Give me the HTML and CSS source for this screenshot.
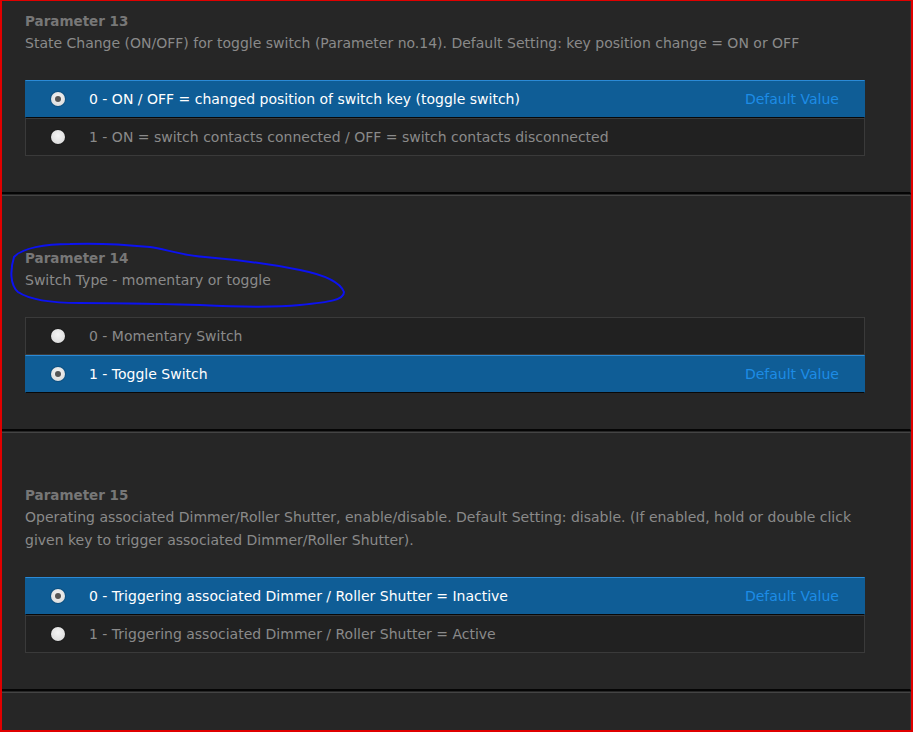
FILE: index.html
```html
<!DOCTYPE html>
<html lang="en">
<head>
    <meta charset="UTF-8">
    <meta name="viewport" content="width=device-width, initial-scale=1.0">
    <title>Configuration parameters</title>
    <link rel="stylesheet" href="styles.css">
</head>
<body>
    <div class="frame">
        <div class="param param-first">
            <div class="param-title">Parameter 13</div>
            <div class="param-desc">State Change (ON/OFF) for toggle switch (Parameter no.14). Default Setting: key position change = ON or OFF</div>
            <div class="options">
                <div class="option selected">
                    <span class="radio"></span>
                    <span class="option-label">0 - ON / OFF = changed position of switch key (toggle switch)</span>
                    <span class="default-tag">Default Value</span>
                </div>
                <div class="option">
                    <span class="radio"></span>
                    <span class="option-label">1 - ON = switch contacts connected / OFF = switch contacts disconnected</span>
                </div>
            </div>
        </div>

        <div class="param">
            <div class="param-title">Parameter 14</div>
            <div class="param-desc">Switch Type - momentary or toggle</div>
            <div class="options">
                <div class="option">
                    <span class="radio"></span>
                    <span class="option-label">0 - Momentary Switch</span>
                </div>
                <div class="option selected">
                    <span class="radio"></span>
                    <span class="option-label">1 - Toggle Switch</span>
                    <span class="default-tag">Default Value</span>
                </div>
            </div>
        </div>

        <div class="param">
            <div class="param-title">Parameter 15</div>
            <div class="param-desc">Operating associated Dimmer/Roller Shutter, enable/disable. Default Setting: disable. (If enabled, hold or double click given key to trigger associated Dimmer/Roller Shutter).</div>
            <div class="options">
                <div class="option selected">
                    <span class="radio"></span>
                    <span class="option-label">0 - Triggering associated Dimmer / Roller Shutter = Inactive</span>
                    <span class="default-tag">Default Value</span>
                </div>
                <div class="option">
                    <span class="radio"></span>
                    <span class="option-label">1 - Triggering associated Dimmer / Roller Shutter = Active</span>
                </div>
            </div>
        </div>

        <div class="param param-last"></div>

        <!-- pen mark around parameter 14 -->
        <svg class="pen-mark" width="913" height="732" viewBox="0 0 913 732">
            <path d="M14 257 C 22 248, 45 244, 70 244 C 95 243, 120 244, 150 247 C 165 249, 180 255, 205 257 C 240 260, 270 264, 300 270 C 325 275, 340 282, 344 292 C 344 300, 330 302, 300 305 C 270 308, 240 307, 200 305 C 160 304, 120 303, 80 303 C 50 303, 30 300, 18 292 C 10 285, 10 270, 14 257 Z"
                  fill="none" stroke="#0c12f0" stroke-width="2" stroke-linejoin="round"/>
        </svg>
    </div>
</body>
</html>
```

FILE: styles.css
```css
body {
    margin: 0;
    background-color: #262626;
    font-family: "DejaVu Sans", Verdana, sans-serif;
    font-size: 14px;
}
.frame {
    position: relative;
    height: 732px;
    box-sizing: border-box;
    border: 2px solid #e00000;
    border-top-width: 1px;
    overflow: hidden;
}
.param {
    padding: 53px 45px 36px 23px;
    border-bottom: 2px solid #050505;
    border-right: 1px solid #353535;
}
.param + .param {
    margin-top: 1px;
    border-top: 1px solid #444;
}
.param-first {
    padding-top: 11px;
}
.param-title {
    font-size: 13.5px;
    font-weight: bold;
    color: #777;
    line-height: 18px;
    margin-bottom: 2px;
}
.param-desc {
    color: #8a8a8a;
    line-height: 23px;
    margin-bottom: 25px;
}
.options {
    display: flex;
    flex-direction: column;
}
.option {
    display: flex;
    align-items: center;
    height: 36px;
    padding: 0 25px 0 25px;
    background-color: #212121;
    border: 1px solid #3a3a3a;
    color: #8a8a8a;
}
.option.selected {
    background-color: #0f5d96;
    border-color: #0f5d96;
    border-top-color: #2b8ad6;
    border-bottom-color: #080808;
    color: #fff;
}
.radio {
    width: 14px;
    height: 14px;
    border-radius: 50%;
    background: radial-gradient(circle at 50% 40%, #f4f4f4, #d6d6d6);
    box-shadow: 0 0 0 1px rgba(0,0,0,0.15);
    margin-right: 24px;
    flex-shrink: 0;
    position: relative;
}
.selected .radio::after {
    content: "";
    position: absolute;
    left: 4px;
    top: 4px;
    width: 6px;
    height: 6px;
    border-radius: 50%;
    background-color: #555;
}
.option-label {
    flex: 1;
}
.default-tag {
    color: #1d8ce6;
}
.param-last {
    height: 60px;
    padding: 0;
}
.pen-mark {
    position: absolute;
    left: -2px;
    top: -1px;
    pointer-events: none;
}
```
